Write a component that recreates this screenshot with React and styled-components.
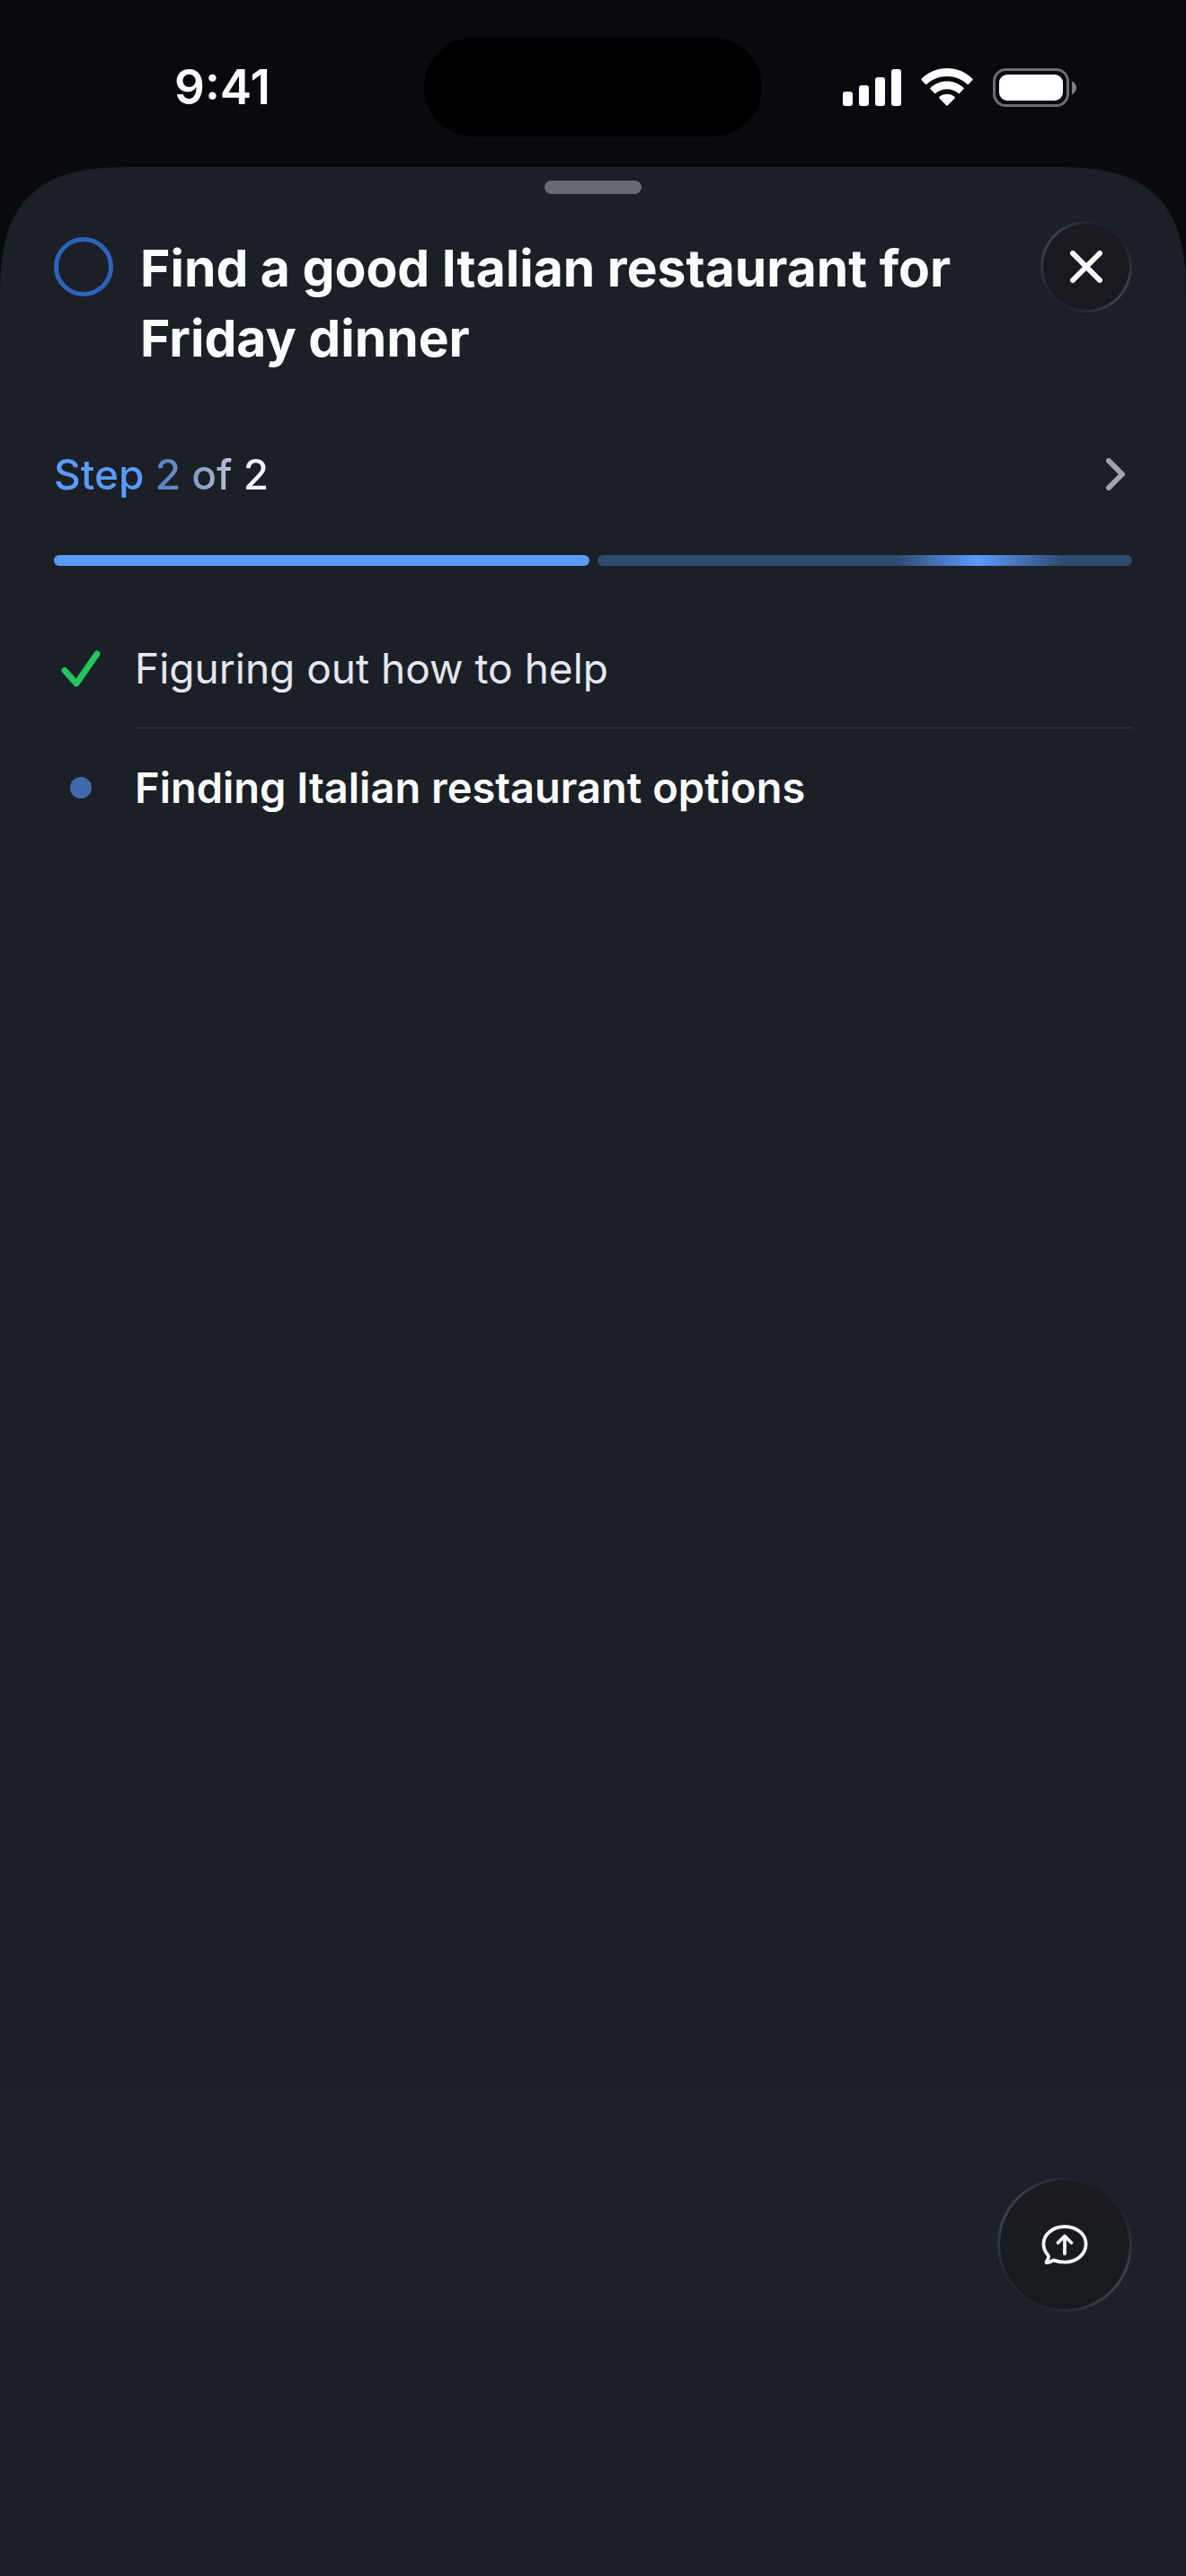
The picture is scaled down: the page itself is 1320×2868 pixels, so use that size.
import React from "react"
import styled, { createGlobalStyle, css } from "styled-components"

const GlobalStyle = createGlobalStyle`
  * {
    box-sizing: border-box;
  }

  body {
    margin: 0;
    background: #090a0d;
    color: #fcfdff;
    font-family: Inter, "Liberation Sans", sans-serif;
  }

  button {
    padding: 0;
    border: 0;
    background: none;
    color: inherit;
    font: inherit;
    cursor: pointer;
  }
`

const Screen = styled.div`
  display: flex;
  flex-direction: column;
  min-height: 100vh;
`

const StatusBar = styled.header`
  display: grid;
  grid-template-columns: 1fr 376px 1fr;
  align-items: center;
  height: 186px;
  padding-top: 8px;
`

const Time = styled.time`
  padding-left: 194px;
  font-size: 53px;
  font-weight: 600;
  line-height: 64px;
`

const Island = styled.div`
  height: 110px;
  border-radius: 55px;
  background: #000;
`

const StatusIcons = styled.div`
  display: flex;
  align-items: center;
  justify-content: flex-end;
  gap: 22px;
  padding-right: 121px;
`

const Sheet = styled.main`
  display: flex;
  flex: 1;
  flex-direction: column;
  padding: 15px 60px 294px;
  border-radius: 110px 110px 0 0;
  background: linear-gradient(#1a2026 78%, #1c2028 80%, #1c2028 89%, #1a2026 91%);

  @supports (corner-shape: superellipse(1.5)) {
    border-radius: 150px 150px 0 0;
    corner-shape: superellipse(1.5);
  }
`

const Grabber = styled.div`
  align-self: center;
  width: 108px;
  height: 15px;
  border-radius: 8px;
  background: #656974;
`

const TaskHeader = styled.div`
  display: flex;
  align-items: flex-start;
  gap: 30px;
  margin-top: 30px;
`

const TaskCheckbox = styled.input`
  flex: none;
  appearance: none;
  width: 66px;
  height: 66px;
  margin: 18px 0 0;
  border: 5px solid #2f63ba;
  border-radius: 50%;
  cursor: pointer;

  &:checked {
    background: #2f63ba;
  }
`

const TaskTitle = styled.h1`
  flex: 1;
  margin: 0;
  padding-top: 14px;
  font-size: 57px;
  font-weight: 700;
  line-height: 78px;
`

const RoundButton = styled.button`
  display: flex;
  flex: none;
  align-items: center;
  justify-content: center;
  width: ${({ $size }) => $size}px;
  height: ${({ $size }) => $size}px;
  border: 3px solid transparent;
  border-radius: 50%;
  background:
    linear-gradient(#1a1b20, ${({ $fill }) => $fill}) padding-box,
    linear-gradient(215deg, #1d2026 15%, #3a3f48 42%, #3a3f48 60%, #1d2026 88%) border-box;
`

const FloatingButton = styled(RoundButton)`
  align-self: flex-end;
  margin-top: auto;
`

const StepRow = styled.button`
  display: flex;
  align-items: center;
  justify-content: space-between;
  height: 60px;
  margin-top: 82px;
  padding-right: 7px;
`

const StepLabel = styled.span`
  background: linear-gradient(90deg, #5b9bff 38%, #5b82c0 52%, #a9b3cf 78%, #f4f6fb 92%);
  background-clip: text;
  color: transparent;
  font-size: 46px;
  font-weight: 500;
  line-height: 60px;
`

const Progress = styled.div`
  display: flex;
  gap: 9px;
  margin-top: 60px;
`

const Segment = styled.div`
  flex: 1;
  height: 12px;
  border-radius: 6px;
  background: #5b9bff;

  ${({ $active }) =>
    $active &&
    css`
      background: linear-gradient(90deg, #304a70 56%, #5b9bff 71%, #304a70 87%);
    `}
`

const StepList = styled.ol`
  margin: 48px 0 0;
  padding: 0;
  list-style: none;
`

const StepItem = styled.li`
  display: grid;
  grid-template-columns: 60px 1fr;
  column-gap: 30px;
  align-items: center;
  justify-items: center;
`

const StepText = styled.span`
  justify-self: stretch;
  padding: 36px 0;
  color: ${({ $current }) => ($current ? "#fcfdff" : "#e4e7f0")};
  font-size: ${({ $current }) => ($current ? 47 : 46)}px;
  font-weight: ${({ $current }) => ($current ? 600 : 400)};
  line-height: 60px;

  ${StepItem}:not(:last-child) & {
    border-bottom: 1px solid #373c43;
  }
`

const Dot = styled.span`
  width: 24px;
  height: 24px;
  border-radius: 50%;
  background: #4269ab;
`

const SignalIcon = () => (
  <svg width="65" height="41" viewBox="0 0 65 41" fill="#fff" aria-hidden="true">
    <rect x="0" y="25" width="11" height="16" rx="3" />
    <rect x="18" y="18" width="11" height="23" rx="3" />
    <rect x="36" y="9" width="11" height="32" rx="3" />
    <rect x="54" y="0" width="11" height="41" rx="3" />
  </svg>
)

const WifiIcon = () => (
  <svg width="58" height="42" viewBox="0 0 58 42" fill="#fff" aria-hidden="true">
    <path d="M29 0C40 0 50 4.300 57.300 11.600Q58 12.400 57.300 13.200L53 17.800Q52.300 18.400 51.500 17.700C45.500 12.200 37.500 9 29 9S12.500 12.200 6.500 17.700Q5.700 18.400 5 17.800L.700 13.200Q0 12.400.700 11.600C8 4.300 18 0 29 0Z" />
    <path d="M29 14.600C36.200 14.600 42.600 17.300 47.400 21.700Q48.200 22.500 47.400 23.300L43 27.800Q42.200 28.500 41.400 27.800C38.100 25 33.800 23.300 29 23.300S19.900 25 16.600 27.800Q15.800 28.500 15 27.800L10.600 23.300Q9.800 22.500 10.600 21.700C15.400 17.300 21.800 14.600 29 14.600Z" />
    <path d="M29 28.800C32.300 28.800 35.300 29.900 37.500 31.800Q38.300 32.600 37.500 33.400L29.800 41.300Q29 42 28.200 41.300L20.500 33.400Q19.700 32.600 20.500 31.800C22.700 29.900 25.700 28.800 29 28.800Z" />
  </svg>
)

const BatteryIcon = () => (
  <svg width="94" height="43" viewBox="0 0 94 43" aria-hidden="true">
    <rect x="1.500" y="1.500" width="82" height="40" rx="13" fill="none" stroke="#6d6e71" strokeWidth="3" />
    <rect x="7" y="7" width="71" height="29" rx="9" fill="#fff" />
    <path d="M88 14.500C91 15.500 93 18.300 93 21.700S91 27.900 88 28.900Z" fill="#7b7c7f" />
  </svg>
)

const CloseIcon = () => (
  <svg width="36" height="36" viewBox="0 0 36 36" fill="none" stroke="#fff" strokeWidth="6" strokeLinecap="round" aria-hidden="true">
    <path d="M3 3L33 33M33 3L3 33" />
  </svg>
)

const ChevronIcon = () => (
  <svg width="22" height="36" viewBox="0 0 22 36" fill="none" stroke="#a0a3ad" strokeWidth="6" strokeLinecap="round" strokeLinejoin="round" aria-hidden="true">
    <path d="M3 3L18 18L3 33" />
  </svg>
)

const CheckIcon = () => (
  <svg width="44" height="42" viewBox="0 0 44 42" fill="none" stroke="#22c55e" strokeWidth="7" strokeLinecap="round" strokeLinejoin="round" aria-hidden="true">
    <path d="M4 22.500L17 37L40 4" />
  </svg>
)

const ReplyIcon = () => (
  <svg width="52" height="44" viewBox="0 0 52 44" fill="none" stroke="#f1f3f6" strokeWidth="3.800" strokeLinecap="round" strokeLinejoin="round" aria-hidden="true">
    <path d="M26 2C12.700 2 2.400 10.700 2.400 21.500C2.400 26.300 4.300 30.200 7.300 33.600C8.300 34.800 8.300 36.200 7.400 38L5.600 41.200C5.300 41.900 5.700 42.300 6.500 42.200C9.300 42 11.800 40.500 13.600 39.400C17.300 40.800 21.400 41.600 26 41.600C39.300 41.600 49.600 32.600 49.600 21.500S39.300 2 26 2Z" />
    <path d="M26 32V13M18.500 20L26 12.500L33.500 20" />
  </svg>
)

const steps = [
  { text: "Figuring out how to help", current: false },
  { text: "Finding Italian restaurant options", current: true },
]

const App = () => {
  return (
    <>
      <GlobalStyle />
      <Screen>
        <StatusBar>
          <Time>9:41</Time>
          <Island />
          <StatusIcons>
            <SignalIcon />
            <WifiIcon />
            <BatteryIcon />
          </StatusIcons>
        </StatusBar>
        <Sheet>
          <Grabber />
          <TaskHeader>
            <TaskCheckbox type="checkbox" aria-labelledby="task-title" />
            <TaskTitle id="task-title">Find a good Italian restaurant for Friday dinner</TaskTitle>
            <RoundButton type="button" aria-label="Close" $size={102} $fill="#18191f">
              <CloseIcon />
            </RoundButton>
          </TaskHeader>
          <StepRow type="button">
            <StepLabel>Step 2 of 2</StepLabel>
            <ChevronIcon />
          </StepRow>
          <Progress>
            <Segment />
            <Segment $active />
          </Progress>
          <StepList>
            {steps.map(({ text, current }) => (
              <StepItem key={text}>
                {current ? <Dot /> : <CheckIcon />}
                <StepText $current={current}>{text}</StepText>
              </StepItem>
            ))}
          </StepList>
          <FloatingButton type="button" aria-label="Reply" $size={150} $fill="#15191d">
            <ReplyIcon />
          </FloatingButton>
        </Sheet>
      </Screen>
    </>
  )
}

export default App
